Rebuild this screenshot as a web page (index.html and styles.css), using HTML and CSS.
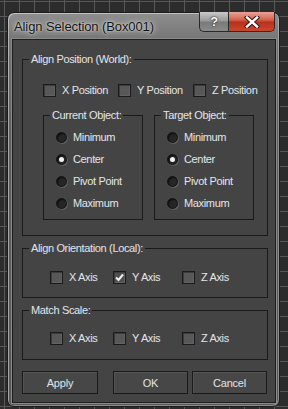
FILE: index.html
```
<!DOCTYPE html>
<html>
<head>
    <title>Align Selection (Box001)</title>
    <meta charset="UTF-8">
    <link rel="stylesheet" href="styles.css">
</head>
<body>
    <div class="window">
        <div class="titlebar">
            <span class="title">Align Selection (Box001)</span>
            <div class="caption-btns">
                <span class="cap help">?</span>
                <span class="cap close">
                    <svg width="16" height="12" viewBox="0 0 16 12">
                        <path d="M3 1.5 L13 10.5 M13 1.5 L3 10.5" stroke="#3a1a14" stroke-width="4.5" stroke-linecap="square"/>
                        <path d="M3 1.5 L13 10.5 M13 1.5 L3 10.5" stroke="#fff" stroke-width="2.4" stroke-linecap="square"/>
                    </svg>
                </span>
            </div>
        </div>

        <div class="client">
            <fieldset class="group pos-group">
                <legend>Align Position (World):</legend>
                <div class="check-row pos-row">
                    <label class="check"><span class="box"></span>X Position</label>
                    <label class="check"><span class="box"></span>Y Position</label>
                    <label class="check"><span class="box"></span>Z Position</label>
                </div>
                <div class="sub-groups">
                    <fieldset class="group sub">
                        <legend>Current Object:</legend>
                        <div class="radio-list">
                            <label class="radio"><span class="dot"></span>Minimum</label>
                            <label class="radio on"><span class="dot"></span>Center</label>
                            <label class="radio"><span class="dot"></span>Pivot Point</label>
                            <label class="radio"><span class="dot"></span>Maximum</label>
                        </div>
                    </fieldset>
                    <fieldset class="group sub">
                        <legend>Target Object:</legend>
                        <div class="radio-list">
                            <label class="radio"><span class="dot"></span>Minimum</label>
                            <label class="radio on"><span class="dot"></span>Center</label>
                            <label class="radio"><span class="dot"></span>Pivot Point</label>
                            <label class="radio"><span class="dot"></span>Maximum</label>
                        </div>
                    </fieldset>
                </div>
            </fieldset>

            <fieldset class="group axis-group">
                <legend>Align Orientation (Local):</legend>
                <div class="check-row axis-row">
                    <label class="check"><span class="box"></span>X Axis</label>
                    <label class="check"><span class="box checked">
                        <svg width="11" height="11" viewBox="0 0 11 11"><path d="M2 5.5 L4.5 8 L9 2.5" fill="none" stroke="#f0f0f0" stroke-width="2"/></svg>
                    </span>Y Axis</label>
                    <label class="check"><span class="box"></span>Z Axis</label>
                </div>
            </fieldset>

            <fieldset class="group axis-group scale-group">
                <legend>Match Scale:</legend>
                <div class="check-row axis-row">
                    <label class="check"><span class="box"></span>X Axis</label>
                    <label class="check"><span class="box"></span>Y Axis</label>
                    <label class="check"><span class="box"></span>Z Axis</label>
                </div>
            </fieldset>

            <div class="button-row">
                <button class="apply">Apply</button>
                <button class="ok">OK</button>
                <button class="cancel">Cancel</button>
            </div>
        </div>
    </div>
</body>
</html>
```

FILE: styles.css
```
* {
    box-sizing: border-box;
    margin: 0;
    padding: 0;
}

body {
    width: 288px;
    height: 409px;
    overflow: hidden;
    font-family: 'Liberation Sans', Arial, sans-serif;
    font-size: 11px;
    letter-spacing: -0.35px;
    color: #e2e6ec;
    background-color: #2c2c2c;
    background-image:
        linear-gradient(90deg, #585858 1px, transparent 1px),
        linear-gradient(#585858 1px, transparent 1px);
    background-size: 15px 15px;
    background-position: 4px 1px;
    padding: 12px 0 0 7px;
}

.window {
    width: 273px;
    border: 1px solid #1c1c1c;
    border-radius: 7px;
    background: linear-gradient(to bottom, #8e8e8e 0, #747474 28px, #5f5f5f 120px, #585858 100%);
    box-shadow: inset 1px 1px 0 rgba(255, 255, 255, 0.45), inset -1px -1px 0 rgba(255, 255, 255, 0.3);
    padding: 0 3px 3px 4px;
}

.titlebar {
    display: flex;
    justify-content: space-between;
    height: 26px;
}

.title {
    font-size: 13px;
    letter-spacing: -0.1px;
    color: #111;
    padding: 6px 0 0 2px;
    text-shadow: 0 0 6px rgba(255, 255, 255, 0.9), 0 0 2px rgba(255, 255, 255, 0.8);
}

.caption-btns {
    display: flex;
    height: 20px;
    margin-top: -1px;
    margin-right: 1px;
}

.cap {
    display: flex;
    align-items: center;
    justify-content: center;
    height: 20px;
    border: 1px solid #2a2a2a;
    border-top: none;
}

.help {
    width: 29px;
    border-radius: 0 0 0 5px;
    border-right: none;
    background: linear-gradient(to bottom, #c9c9c9 0, #9a9a9a 45%, #7a7a7a 55%, #8a8a8a 100%);
    color: #fff;
    font-weight: bold;
    font-size: 13px;
    text-shadow: 0 0 2px #222, 0 0 1px #000;
}

.close {
    width: 47px;
    border-radius: 0 0 5px 0;
    background: linear-gradient(to bottom, #e9a497 0, #d3644f 40%, #b8321a 55%, #c9482c 100%);
}

.client {
    border: 1px solid #1e1e1e;
    outline: 1px solid #8a8a8a;
    background: #444444;
    padding: 13px 7px 8px 9px;
}

.group {
    border: 1px solid #1a1a1a;
    padding: 0;
}

.group legend {
    margin-left: 6px;
    padding: 0 2px;
    line-height: 13px;
    height: 13px;
}

.pos-group {
    padding-bottom: 15px;
}

.check-row {
    display: grid;
    height: 16px;
    align-items: center;
}

.pos-row {
    grid-template-columns: 75px 75px auto;
    margin: 16px 0 0 20px;
}

.check {
    display: flex;
    align-items: center;
    gap: 6px;
    height: 16px;
    white-space: nowrap;
}

.box {
    display: flex;
    align-items: center;
    justify-content: center;
    width: 13px;
    height: 13px;
    border: 1px solid #1b1b1b;
    background: #585858;
    box-shadow: inset 1px 1px 0 #3c3c3c, inset -1px -1px 0 #626262;
}

.box.checked {
    background: #4e4e4e;
}

.sub-groups {
    display: flex;
    gap: 11px;
    margin: 11px 0 0 20px;
}

.sub {
    width: 100px;
    padding-bottom: 8px;
}

.radio-list {
    display: flex;
    flex-direction: column;
    gap: 6px;
    margin-top: 7px;
    padding-left: 12px;
}

.radio {
    display: flex;
    align-items: center;
    gap: 6px;
    height: 16px;
}

.dot {
    display: flex;
    align-items: center;
    justify-content: center;
    width: 11px;
    height: 11px;
    border-radius: 50%;
    background: #262626;
    border: 1px solid #151515;
    box-shadow: 1px 1px 0 #5c5c5c, inset 1px 1px 1px #0e0e0e;
}

.radio.on .dot::after {
    content: "";
    width: 5px;
    height: 5px;
    border-radius: 50%;
    background: #f2f2f2;
}

.axis-group {
    margin-top: 6px;
    padding-bottom: 12px;
}

.axis-row {
    grid-template-columns: 63px 69px auto;
    margin: 14px 0 0 27px;
}

.scale-group {
    padding-bottom: 13px;
}

.scale-group .axis-row {
    margin-top: 13px;
}

.button-row {
    display: flex;
    margin-top: 11px;
}

button {
    height: 23px;
    width: 75px;
    font-family: inherit;
    font-size: 11px;
    letter-spacing: -0.2px;
    color: #e2e5e8;
    background: #474747;
    border: 1px solid #1a1a1a;
    box-shadow: inset 1px 1px 0 #555;
}

button.apply {
    width: 76px;
    margin-right: 15px;
}

button.ok {
    margin-right: 4px;
}
```
